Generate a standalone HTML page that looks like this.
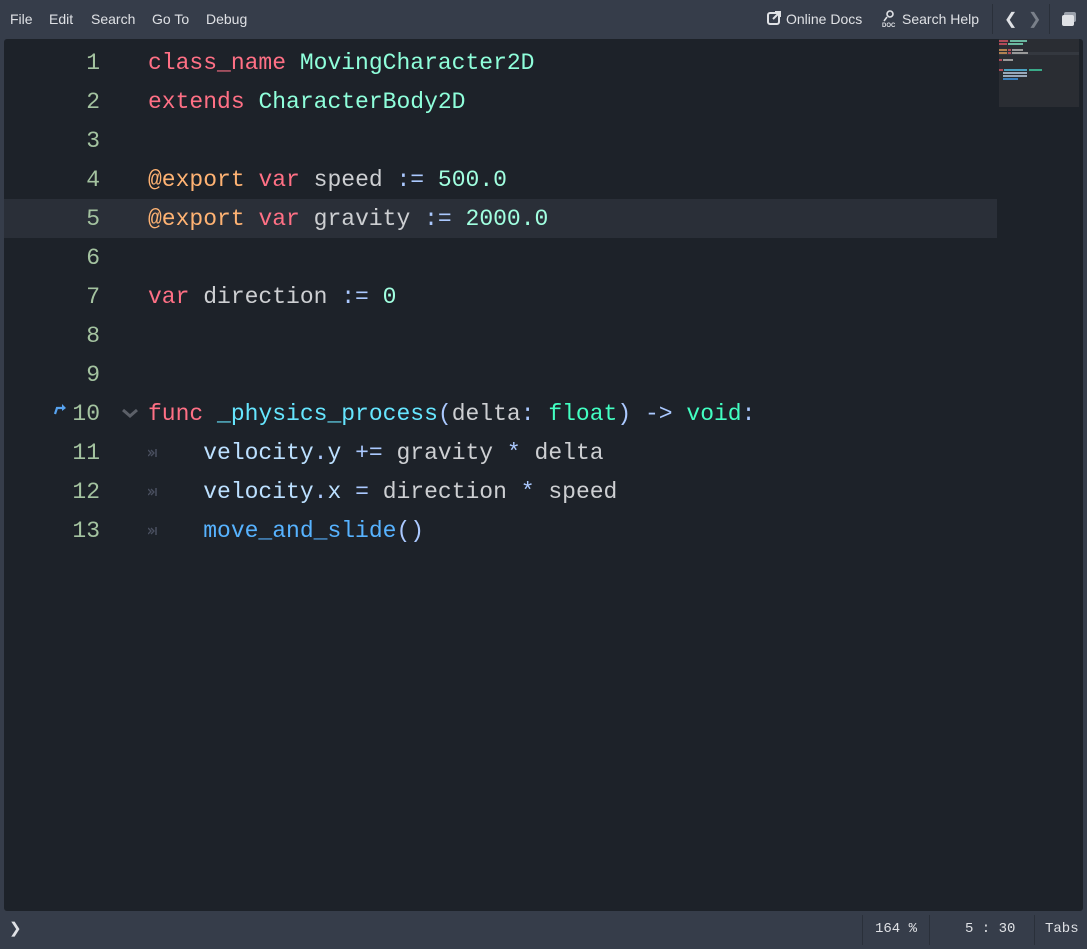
<!DOCTYPE html>
<html><head><meta charset="utf-8"><style>
html,body{margin:0;padding:0;width:1087px;height:949px;overflow:hidden;background:#363d4a;font-family:"Liberation Sans",sans-serif;}
.top{position:absolute;left:0;top:0;width:1087px;height:38px;color:#dfe1e5;font-size:14px;}
.top span{position:absolute;top:11px;}
.ed{position:absolute;left:4px;top:39px;width:1079px;height:872px;background:#1d2229;border-radius:3px;overflow:hidden;}
.hl{position:absolute;left:0;top:160px;width:993px;height:39px;background:#2a2f38;}
.ln{position:absolute;left:0;width:96px;text-align:right;font-family:"Liberation Mono",monospace;font-size:23px;color:#a4c3a0;}
.code{position:absolute;left:144px;font-family:"Liberation Mono",monospace;font-size:23px;color:#cdcfd2;white-space:pre;}
.row{position:absolute;height:39px;line-height:39px;}
.k{color:#ff7085}.t{color:#8fffdb}.b{color:#42ffc2}.n{color:#a1ffe0}.s{color:#abc9ff}.a{color:#ffb373}.f{color:#66e6ff}.m{color:#bce0ff}.c{color:#57b3ff}
.mini{position:absolute;left:995px;top:0;width:80px;height:68px;background:#2a2d33;}
.mini i{position:absolute;height:2px;}
.status{position:absolute;left:0;top:911px;width:1087px;height:38px;color:#dfe1e5;font-family:"Liberation Mono",monospace;font-size:14px;}
.status span{position:absolute;top:10px;}
.sep{position:absolute;top:4px;width:1px;height:30px;background:#2a303a;}
.tab{position:absolute;left:144px;width:10px;height:8px;}
</style></head><body>
<div class="top">
<span style="left:10px">File</span><span style="left:49px">Edit</span><span style="left:91px">Search</span><span style="left:152px">Go To</span><span style="left:206px">Debug</span>
<svg style="position:absolute;left:767px;top:11px" width="14" height="14" viewBox="0 0 14 14"><rect x="1" y="2" width="11" height="11" rx="2" fill="none" stroke="#dfe1e5" stroke-width="2"/><path d="M6 8L12 2M8 1h5v5" stroke="#dfe1e5" stroke-width="2" fill="none"/></svg>
<span style="left:786px">Online Docs</span>
<svg style="position:absolute;left:882px;top:10px" width="16" height="18" viewBox="0 0 16 18"><circle cx="8" cy="4" r="3" fill="none" stroke="#dfe1e5" stroke-width="1.6"/><path d="M5 7L2 11" stroke="#dfe1e5" stroke-width="1.6"/><text x="0" y="17" font-size="6" font-weight="bold" fill="#dfe1e5" font-family="Liberation Sans">DOC</text></svg>
<span style="left:902px">Search Help</span>
<div style="position:absolute;left:992px;top:4px;width:1px;height:30px;background:#2a303a"></div>
<span style="left:1004px;font-size:16px;top:9px">❮</span><span style="left:1028px;font-size:16px;top:9px;color:#7a808a">❯</span>
<div style="position:absolute;left:1049px;top:4px;width:1px;height:30px;background:#2a303a"></div>
<svg style="position:absolute;left:1061px;top:11px" width="16" height="16" viewBox="0 0 16 16"><rect x="3" y="1" width="12" height="10" rx="2" fill="#9aa0aa"/><rect x="1" y="4" width="12" height="11" rx="2" fill="#dfe1e5"/></svg>
</div>
<div class="ed">
<div class="hl"></div>
<div class="mini">
<i style="left:0;top:1px;width:9px;background:#b04a58"></i><i style="left:11px;top:1px;width:17px;background:#6ab8a0"></i>
<i style="left:0;top:4px;width:8px;background:#b04a58"></i><i style="left:9px;top:4px;width:15px;background:#6ab8a0"></i>
<i style="left:0;top:10px;width:8px;background:#b08050"></i><i style="left:9px;top:10px;width:3px;background:#b04a58"></i><i style="left:13px;top:10px;width:11px;background:#999"></i>
<i style="left:0;top:13px;width:80px;height:3px;background:#34383f"></i>
<i style="left:0;top:13px;width:8px;background:#b08050"></i><i style="left:9px;top:13px;width:3px;background:#b04a58"></i><i style="left:13px;top:13px;width:16px;background:#999"></i>
<i style="left:0;top:20px;width:3px;background:#b04a58"></i><i style="left:4px;top:20px;width:10px;background:#999"></i>
<i style="left:0;top:30px;width:4px;background:#b04a58"></i><i style="left:5px;top:30px;width:23px;background:#4aa0c0"></i><i style="left:30px;top:30px;width:13px;background:#3aaa88"></i>
<i style="left:4px;top:33px;width:24px;background:#99a8bb"></i><i style="left:4px;top:36px;width:24px;background:#99a8bb"></i>
<i style="left:4px;top:39px;width:15px;background:#3a80c0"></i>
</div>
<div class="ln" style="top:5px">
<div class="row" style="top:0;right:0">1</div><div class="row" style="top:39px;right:0">2</div><div class="row" style="top:78px;right:0">3</div><div class="row" style="top:117px;right:0">4</div><div class="row" style="top:156px;right:0">5</div><div class="row" style="top:195px;right:0">6</div><div class="row" style="top:234px;right:0">7</div><div class="row" style="top:273px;right:0">8</div><div class="row" style="top:312px;right:0">9</div><div class="row" style="top:351px;right:0">10</div><div class="row" style="top:390px;right:0">11</div><div class="row" style="top:429px;right:0">12</div><div class="row" style="top:468px;right:0">13</div>
</div>
<svg style="position:absolute;left:49px;top:363px" width="16" height="14" viewBox="0 0 16 14"><path d="M2 12L4 6H10" stroke="#57a3f0" stroke-width="2.2" fill="none"/><path d="M9 2L13 6L9 9Z" fill="#57a3f0"/></svg>
<svg style="position:absolute;left:117px;top:368px" width="18" height="12" viewBox="0 0 18 12"><path d="M2 3L9 9L16 3" stroke="#5c6068" stroke-width="3" fill="none"/></svg>
<svg class="tab" style="top:410px" viewBox="0 0 10 8"><path d="M0 1L3 4L0 7M3 1L6 4L3 7" stroke="#4a5060" stroke-width="1.3" fill="none"/><path d="M8 0V8" stroke="#4a5060" stroke-width="1.5"/></svg>
<svg class="tab" style="top:449px" viewBox="0 0 10 8"><path d="M0 1L3 4L0 7M3 1L6 4L3 7" stroke="#4a5060" stroke-width="1.3" fill="none"/><path d="M8 0V8" stroke="#4a5060" stroke-width="1.5"/></svg>
<svg class="tab" style="top:488px" viewBox="0 0 10 8"><path d="M0 1L3 4L0 7M3 1L6 4L3 7" stroke="#4a5060" stroke-width="1.3" fill="none"/><path d="M8 0V8" stroke="#4a5060" stroke-width="1.5"/></svg>
<div class="code" style="top:5px">
<div class="row" style="top:0"><span class="k">class_name</span> <span class="t">MovingCharacter2D</span></div>
<div class="row" style="top:39px"><span class="k">extends</span> <span class="t">CharacterBody2D</span></div>
<div class="row" style="top:117px"><span class="a">@export</span> <span class="k">var</span> speed <span class="s">:=</span> <span class="n">500.0</span></div>
<div class="row" style="top:156px"><span class="a">@export</span> <span class="k">var</span> gravity <span class="s">:=</span> <span class="n">2000.0</span></div>
<div class="row" style="top:234px"><span class="k">var</span> direction <span class="s">:=</span> <span class="n">0</span></div>
<div class="row" style="top:351px"><span class="k">func</span> <span class="f">_physics_process</span><span class="s">(</span>delta<span class="s">:</span> <span class="b">float</span><span class="s">)</span> <span class="s">-&gt;</span> <span class="b">void</span><span class="s">:</span></div>
<div class="row" style="top:390px">    <span class="m">velocity</span><span class="s">.</span><span class="m">y</span> <span class="s">+=</span> gravity <span class="s">*</span> delta</div>
<div class="row" style="top:429px">    <span class="m">velocity</span><span class="s">.</span><span class="m">x</span> <span class="s">=</span> direction <span class="s">*</span> speed</div>
<div class="row" style="top:468px">    <span class="c">move_and_slide</span><span class="s">()</span></div>
</div>
</div>
<div class="status">
<span style="left:9px;font-family:'Liberation Sans';font-size:15px;top:8px">❯</span>
<div class="sep" style="left:862px"></div>
<span style="left:875px">164 %</span>
<div class="sep" style="left:929px"></div>
<span style="left:965px">5 :  30</span>
<div class="sep" style="left:1034px"></div>
<span style="left:1045px">Tabs</span>
</div>
</body></html>
